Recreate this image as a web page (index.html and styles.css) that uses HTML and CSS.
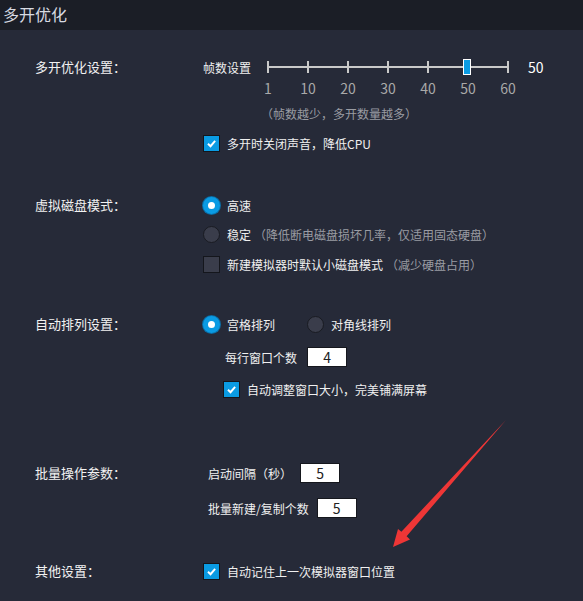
FILE: index.html
```html
<!DOCTYPE html>
<html lang="zh-CN">
<head>
<meta charset="utf-8">
<title>多开优化</title>
<link rel="stylesheet" href="styles.css">
</head>
<body>
<div class="window">
  <div class="titlebar">多开优化</div>
  <div class="body">
    <section class="sec">
      <div class="label">多开优化设置：</div>
      <div class="content">
        <div class="row">
          <span class="sub">帧数设置</span>
          <div class="slider">
            <div class="track"></div>
            <span class="tick"></span><span class="tick"></span><span class="tick"></span><span class="tick"></span><span class="tick"></span><span class="tick"></span><span class="tick"></span>
            <span class="thumb" style="left:196px"></span>
          </div>
          <span class="value">50</span>
        </div>
        <div class="row nums mt1">
          <span>1</span><span>10</span><span>20</span><span>30</span><span>40</span><span>50</span><span>60</span>
        </div>
        <div class="row hint-row mt5"><span class="hint">（帧数越少，多开数量越多）</span></div>
        <div class="row mt10">
          <span class="check on"><svg viewBox="0 0 17 17"><path d="M4.5 8.8 L7.4 11.6 L12.6 5.6" fill="none" stroke="#fff" stroke-width="2.2"/></svg></span>
          <span class="text">多开时关闭声音，降低CPU</span>
        </div>
      </div>
    </section>

    <section class="sec s2">
      <div class="label">虚拟磁盘模式：</div>
      <div class="content">
        <div class="row"><span class="radio on"></span><span class="text">高速</span></div>
        <div class="row mt9"><span class="radio"></span><span class="text">稳定</span><span class="hint gap">（降低断电磁盘损坏几率，仅适用固态硬盘）</span></div>
        <div class="row mt10"><span class="check"></span><span class="text">新建模拟器时默认小磁盘模式</span><span class="hint gap">（减少硬盘占用）</span></div>
      </div>
    </section>

    <section class="sec s3">
      <div class="label">自动排列设置：</div>
      <div class="content">
        <div class="row">
          <span class="radio on"></span><span class="text">宫格排列</span>
          <span class="radio second"></span><span class="text">对角线排列</span>
        </div>
        <div class="row mt13 indent22"><span class="text plain">每行窗口个数</span><span class="input wide">4</span></div>
        <div class="row mt12 indent20">
          <span class="check on"><svg viewBox="0 0 17 17"><path d="M4.5 8.8 L7.4 11.6 L12.6 5.6" fill="none" stroke="#fff" stroke-width="2.2"/></svg></span>
          <span class="text">自动调整窗口大小，完美铺满屏幕</span>
        </div>
      </div>
    </section>

    <section class="sec s4">
      <div class="label">批量操作参数：</div>
      <div class="content">
        <div class="row indent5"><span class="text plain">启动间隔（秒）</span><span class="input">5</span></div>
        <div class="row mt15 indent5"><span class="text plain">批量新建/复制个数</span><span class="input">5</span></div>
      </div>
    </section>

    <section class="sec s5">
      <div class="label">其他设置：</div>
      <div class="content">
        <div class="row">
          <span class="check on"><svg viewBox="0 0 17 17"><path d="M4.5 8.8 L7.4 11.6 L12.6 5.6" fill="none" stroke="#fff" stroke-width="2.2"/></svg></span>
          <span class="text">自动记住上一次模拟器窗口位置</span>
        </div>
      </div>
    </section>

    <svg class="arrow" viewBox="0 0 140 150" width="140" height="150">
      <polygon points="126,10 26.6,126.3 30,129.5 13,137 18,119 21.4,121.7" fill="#ee3636"/>
    </svg>
  </div>
</div>
</body>
</html>
```

FILE: styles.css
```css
* { box-sizing: border-box; }
html, body { margin: 0; padding: 0; }
body {
  width: 583px;
  height: 601px;
  overflow: hidden;
  background: #262a38;
  font-family: "Noto Sans CJK SC", "Noto Sans", sans-serif;
  color: #ececec;
}
.window { width: 583px; height: 601px; }
.titlebar {
  height: 30px;
  background: #1b1e26;
  color: #d8dbe2;
  font-size: 16px;
  line-height: 28px;
  padding-left: 3px;
}
.body {
  position: relative;
  padding: 27px 0 0 35px;
}
.sec { display: flex; align-items: flex-start; }
.s2 { margin-top: 42px; }
.s3 { margin-top: 40px; }
.s4 { margin-top: 64px; }
.s5 { margin-top: 43px; }
.label {
  width: 168px;
  height: 20px;
  line-height: 20px;
  font-size: 13px;
  color: #f2f2f2;
  flex: none;
}
.content { display: flex; flex-direction: column; }
.row {
  display: flex;
  align-items: center;
  height: 20px;
  font-size: 12px;
  white-space: nowrap;
}
.mt1 { margin-top: 1px; }
.mt5 { margin-top: 5px; }
.mt9 { margin-top: 9px; }
.mt10 { margin-top: 10px; }
.mt12 { margin-top: 12px; }
.mt13 { margin-top: 13px; }
.mt15 { margin-top: 15px; }
.indent5 { padding-left: 5px; }
.indent20 { padding-left: 20px; }
.indent22 { padding-left: 22px; }

.sub { width: 64px; font-size: 12px; color: #f0f0f0; }
.slider {
  position: relative;
  width: 242px;
  height: 20px;
  display: flex;
  justify-content: space-between;
  align-items: center;
}
.track {
  position: absolute;
  left: 0; right: 0;
  top: 9px;
  height: 2px;
  background: #c9c9c9;
}
.tick {
  width: 2px;
  height: 12px;
  background: #c9c9c9;
  position: relative;
}
.thumb {
  position: absolute;
  top: 2px;
  width: 8px;
  height: 16px;
  background: #0a9be3;
  border: 1px solid #ffffff;
}
.value { margin-left: 19px; font-size: 14px; color: #ffffff; }

.nums { padding-left: 45px; font-size: 14px; color: #a9a9a9; }
.nums span { width: 40px; text-align: center; }

.hint-row { padding-left: 58px; }
.hint { color: #9a9ca3; font-size: 12px; }
.hint.gap { margin-left: 3px; }

.check {
  width: 17px;
  height: 17px;
  border: 1px solid #14161c;
  background: #3a3d4b;
  display: inline-flex;
  flex: none;
}
.check.on { background: #0a9be3; }
.check svg { width: 15px; height: 15px; }
.radio {
  width: 17px;
  height: 17px;
  border-radius: 50%;
  border: 1px solid #191b22;
  background: #3a3d4b;
  flex: none;
  position: relative;
}
.radio.on {
  background: #ffffff;
  border: 5px solid #0a9be3;
  box-shadow: 0 0 0 1px #0b6ea6;
}
.radio.second { margin-left: 32px; }
.text { margin-left: 7px; color: #f0f0f0; font-size: 12px; }
.text.plain { margin-left: 0; }
.input {
  width: 40px;
  height: 20px;
  background: #ffffff;
  border: 1px solid #15171d;
  color: #222;
  font-size: 14px;
  line-height: 18px;
  text-align: center;
  margin-left: 8px;
}
.input.wide { margin-left: 10px; }

.arrow {
  position: absolute;
  left: 380px;
  top: 380px;
}
```
